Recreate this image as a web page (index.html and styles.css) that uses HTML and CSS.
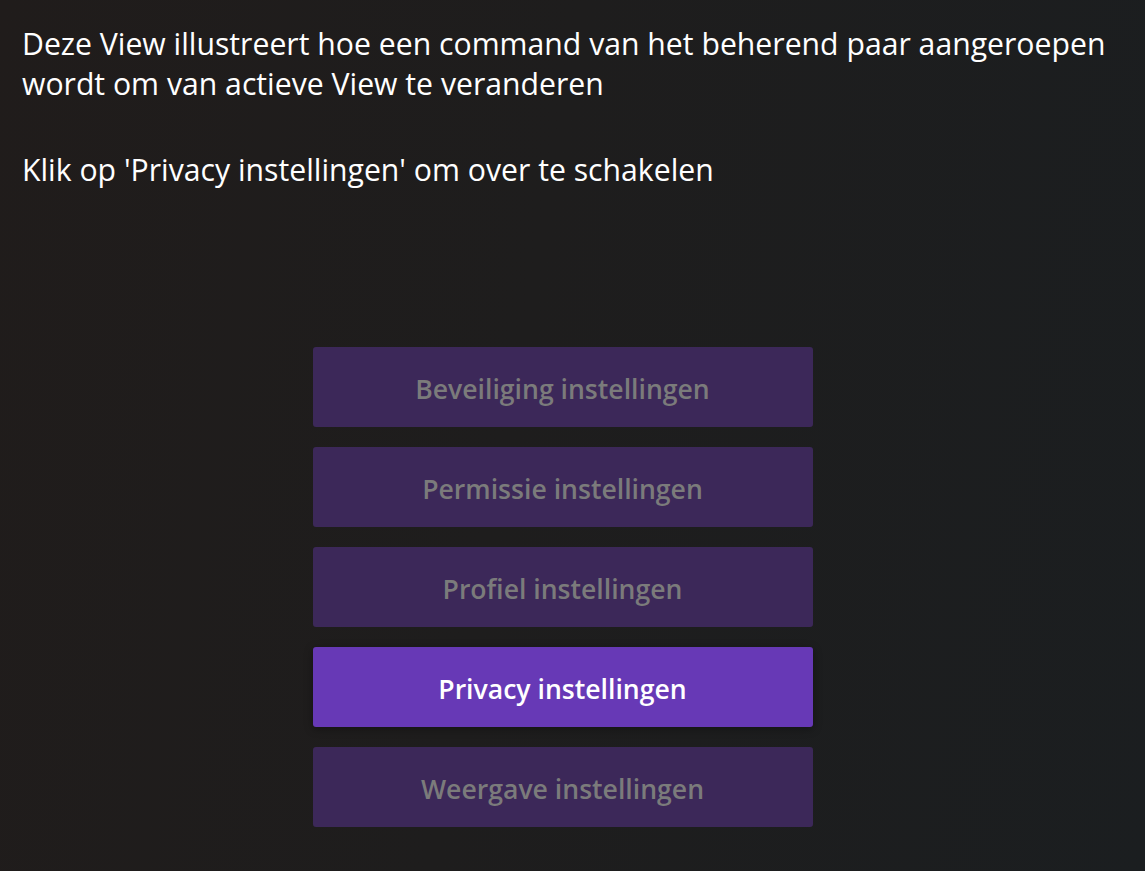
FILE: index.html
```html
<!DOCTYPE html>
<html lang="nl">
<head>
<meta charset="utf-8">
<title>View</title>
<link rel="stylesheet" href="styles.css">
</head>
<body>
<main class="view">
  <div class="intro">
    <p class="lead">Deze View illustreert hoe een command van het beherend paar aangeroepen wordt om van actieve View te veranderen</p>
    <p class="hint">Klik op 'Privacy instellingen' om over te schakelen</p>
  </div>
  <nav class="menu">
    <button class="item">Beveiliging instellingen</button>
    <button class="item">Permissie instellingen</button>
    <button class="item">Profiel instellingen</button>
    <button class="item active">Privacy instellingen</button>
    <button class="item">Weergave instellingen</button>
  </nav>
</main>
</body>
</html>
```

FILE: styles.css
```css
html, body {
  margin: 0;
  height: 100%;
}
body {
  background: linear-gradient(100deg, #201c1b 0%, #1e1d1d 45%, #1b1e20 100%);
  font-family: "Open Sans", "Noto Sans", sans-serif;
  color: #ffffff;
  overflow: hidden;
}
.view {
  display: flex;
  flex-direction: column;
  padding: 24px 20px 0 22px;
  height: 100%;
  box-sizing: border-box;
}
.intro p {
  margin: 0;
  font-size: 30.2px;
  line-height: 39.5px;
}
.intro .hint {
  margin-top: 47px;
}
.menu {
  display: flex;
  flex-direction: column;
  align-items: center;
  gap: 20px;
  margin-top: 157px;
  padding-right: 22px;
}
.item {
  width: 500px;
  height: 80px;
  padding: 4px 0 0;
  border: none;
  border-radius: 3px;
  background: #3c2859;
  color: #7b7b7b;
  font-family: "Open Sans", "Noto Sans", sans-serif;
  font-weight: 600;
  font-size: 26.6px;
  cursor: pointer;
}
.item.active {
  background: #6739b6;
  color: #ffffff;
  box-shadow: 0 2px 8px rgba(0, 0, 0, 0.35);
}
```
